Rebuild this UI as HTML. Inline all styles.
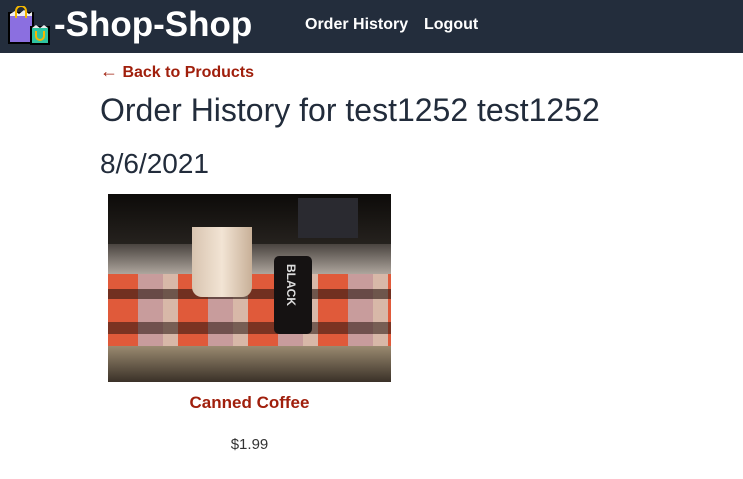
<!DOCTYPE html>
<html><head><style>
body{margin:0;width:743px;height:479px;background:#fff;font-family:"Liberation Sans",Arial,sans-serif;overflow:hidden;position:relative}
header{position:absolute;left:0;top:0;width:743px;height:53px;background:#232d3c}
.t{position:absolute;left:54px;top:5px;color:#fff;font-weight:bold;font-size:35px}
.nav{position:absolute;top:16px;color:#fff;font-weight:bold;font-size:16px}
.a{position:absolute;color:#a01f0c;font-weight:bold}
.img{position:absolute;left:108px;top:194px;width:283px;height:188px;overflow:hidden;background:#1a1410}
.img div{position:absolute}
</style></head><body>
<header>
<svg style="position:absolute;left:7px;top:6px" width="44" height="40" viewBox="0 0 44 40">
<rect x="1" y="6" width="26" height="32" fill="#000"/>
<rect x="3" y="8" width="22" height="28" fill="#8b6fe0"/>
<path d="M3 8 l5 -3 l4 3 l5-4 l5 4 l3 -2 v4 h-22z" fill="#eee"/>
<path d="M9 12 v-7 a5 5 0 0 1 10 0 v7" fill="none" stroke="#f5b800" stroke-width="2"/>
<rect x="23" y="20" width="20" height="19" fill="#000"/>
<rect x="25" y="22" width="16" height="15" fill="#2ec4a0"/>
<path d="M25 22 l4 -3 l4 3 l4-3 l4 3z" fill="#eee"/>
<path d="M29 25 v5 a4 4 0 0 0 8 0 v-5" fill="none" stroke="#f5b800" stroke-width="2"/>
</svg>
<div class="t">-Shop-Shop</div>
<div class="nav" style="left:305px">Order History</div>
<div class="nav" style="left:424px">Logout</div>
</header>
<div class="a" style="left:100px;top:61px;font-size:16px"><span style="font-weight:normal;font-size:18px">←</span> Back to Products</div>
<div style="position:absolute;left:100px;top:92px;font-size:32px;color:#222c3b">Order History for test1252 test1252</div>
<div style="position:absolute;left:100px;top:148px;font-size:28px;color:#222c3b">8/6/2021</div>
<div class="img">
<div style="left:0;top:0;width:283px;height:60px;background:linear-gradient(#0d0b09,#2a2622)"></div>
<div style="left:0;top:50px;width:283px;height:40px;background:linear-gradient(#4a4440,#cfc6bc)"></div>
<div style="left:0;top:80px;width:283px;height:75px;background:repeating-linear-gradient(90deg,#e05a3a 0 30px,#c89c9c 30px 55px,#d8b8a8 55px 70px);"></div>
<div style="left:0;top:95px;width:283px;height:10px;background:rgba(40,20,15,.6)"></div>
<div style="left:0;top:128px;width:283px;height:12px;background:rgba(40,20,15,.55)"></div>
<div style="left:0;top:152px;width:283px;height:36px;background:linear-gradient(#9a8a70,#3a3128)"></div>
<div style="left:84px;top:33px;width:60px;height:70px;background:linear-gradient(90deg,#d8c4b0,#f2e4d4,#c8b098);border-radius:0 0 10px 10px"></div>
<div style="left:166px;top:62px;width:38px;height:78px;background:#151212;border-radius:5px"></div>
<div style="left:172px;top:70px;width:18px;height:65px;color:#ddd;font-size:12px;font-weight:bold;writing-mode:vertical-rl">BLACK</div>
<div style="left:190px;top:4px;width:60px;height:40px;background:#2a2a30"></div>
</div>
<div class="a" style="left:108px;width:283px;text-align:center;top:393px;font-size:17px">Canned Coffee</div>
<div style="position:absolute;left:108px;width:283px;text-align:center;top:436px;font-size:15px;color:#333">$1.99</div>
</body></html>
